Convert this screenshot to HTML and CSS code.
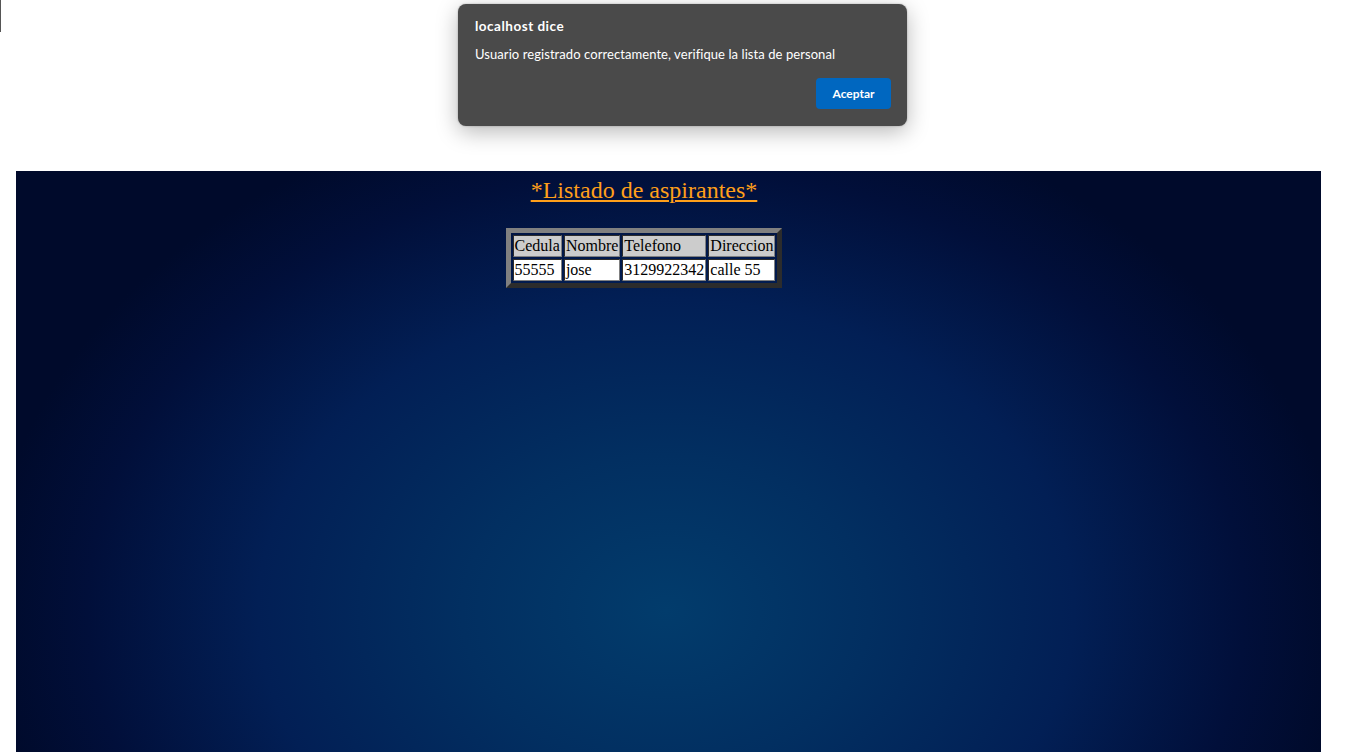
FILE: index.html
```html
<!DOCTYPE html>
<html lang="es">
<head>
<meta charset="utf-8">
<title>Listado de aspirantes</title>
<link rel="stylesheet" href="styles.css">
</head>
<body>
<div class="caret"></div>
<div class="page">
  <div class="panel">
    <div class="content">
      <h1 class="title"><u>*Listado de aspirantes*</u></h1>
      <table class="grid">
        <tr><th>Cedula</th><th>Nombre</th><th>Telefono</th><th>Direccion</th></tr>
        <tr><td>55555</td><td>jose</td><td>3129922342</td><td>calle 55</td></tr>
      </table>
    </div>
  </div>
</div>
<div class="dialog" role="alertdialog">
  <div class="dlg-title">localhost dice</div>
  <div class="dlg-msg">Usuario registrado correctamente, verifique la lista de personal</div>
  <div class="dlg-actions"><button class="dlg-btn">Aceptar</button></div>
</div>
</body>
</html>
```

FILE: styles.css
```css
html, body {
  margin: 0;
  padding: 0;
  background: #ffffff;
  overflow: hidden;
}
body {
  font-family: "Liberation Serif", "Times New Roman", serif;
  height: 752px;
}
.caret {
  position: absolute;
  left: 0;
  top: 0;
  width: 1px;
  height: 32px;
  background: #555555;
}
.page {
  padding: 171px 45px 0 16px;
}
.panel {
  height: 581px;
  background: radial-gradient(ellipse 680px 520px at 650px 440px, #023c6c 0%, #022f61 30%, #021f55 60%, #010f3a 85%, #000a2b 100%);
}
.content {
  width: 1256px;
  padding-top: 6px;
  display: flex;
  flex-direction: column;
  align-items: center;
}
.title {
  margin: 0;
  font-size: 24px;
  font-weight: normal;
  color: #ff9f1a;
  line-height: 27px;
}
.title u {
  text-decoration-color: #ff9f1a;
}
.grid {
  margin-top: 24px;
  border: 5px outset #808080;
  border-spacing: 2px;
  font-size: 16px;
  color: #000;
}
.grid th, .grid td {
  border: 1px inset #808080;
  padding: 1px;
  text-align: left;
  font-weight: normal;
  line-height: 18px;
}
.grid th {
  background: #cccccc;
}
.grid td {
  background: #ffffff;
}
.dialog {
  position: absolute;
  left: 458px;
  top: 4px;
  width: 449px;
  height: 122px;
  box-sizing: border-box;
  padding: 13px 16px 17px 17px;
  background: #4a4a4a;
  border-radius: 8px;
  box-shadow: 0 6px 22px rgba(0, 0, 0, 0.28), 0 0 2px rgba(0, 0, 0, 0.3);
  color: #ffffff;
  font-family: "Lato", "Noto Sans", sans-serif;
  display: flex;
  flex-direction: column;
}
.dlg-title {
  font-size: 13.5px;
  font-weight: bold;
  letter-spacing: 0.5px;
  line-height: 18px;
}
.dlg-msg {
  margin-top: 10px;
  font-size: 13px;
  letter-spacing: 0.07px;
  line-height: 18px;
}
.dlg-actions {
  margin-top: auto;
  display: flex;
  justify-content: flex-end;
}
.dlg-btn {
  width: 75px;
  height: 31px;
  border: none;
  border-radius: 4px;
  background: #0067c0;
  color: #ffffff;
  font-family: "Lato", "Noto Sans", sans-serif;
  font-weight: bold;
  font-size: 12px;
  padding: 0;
}
```
